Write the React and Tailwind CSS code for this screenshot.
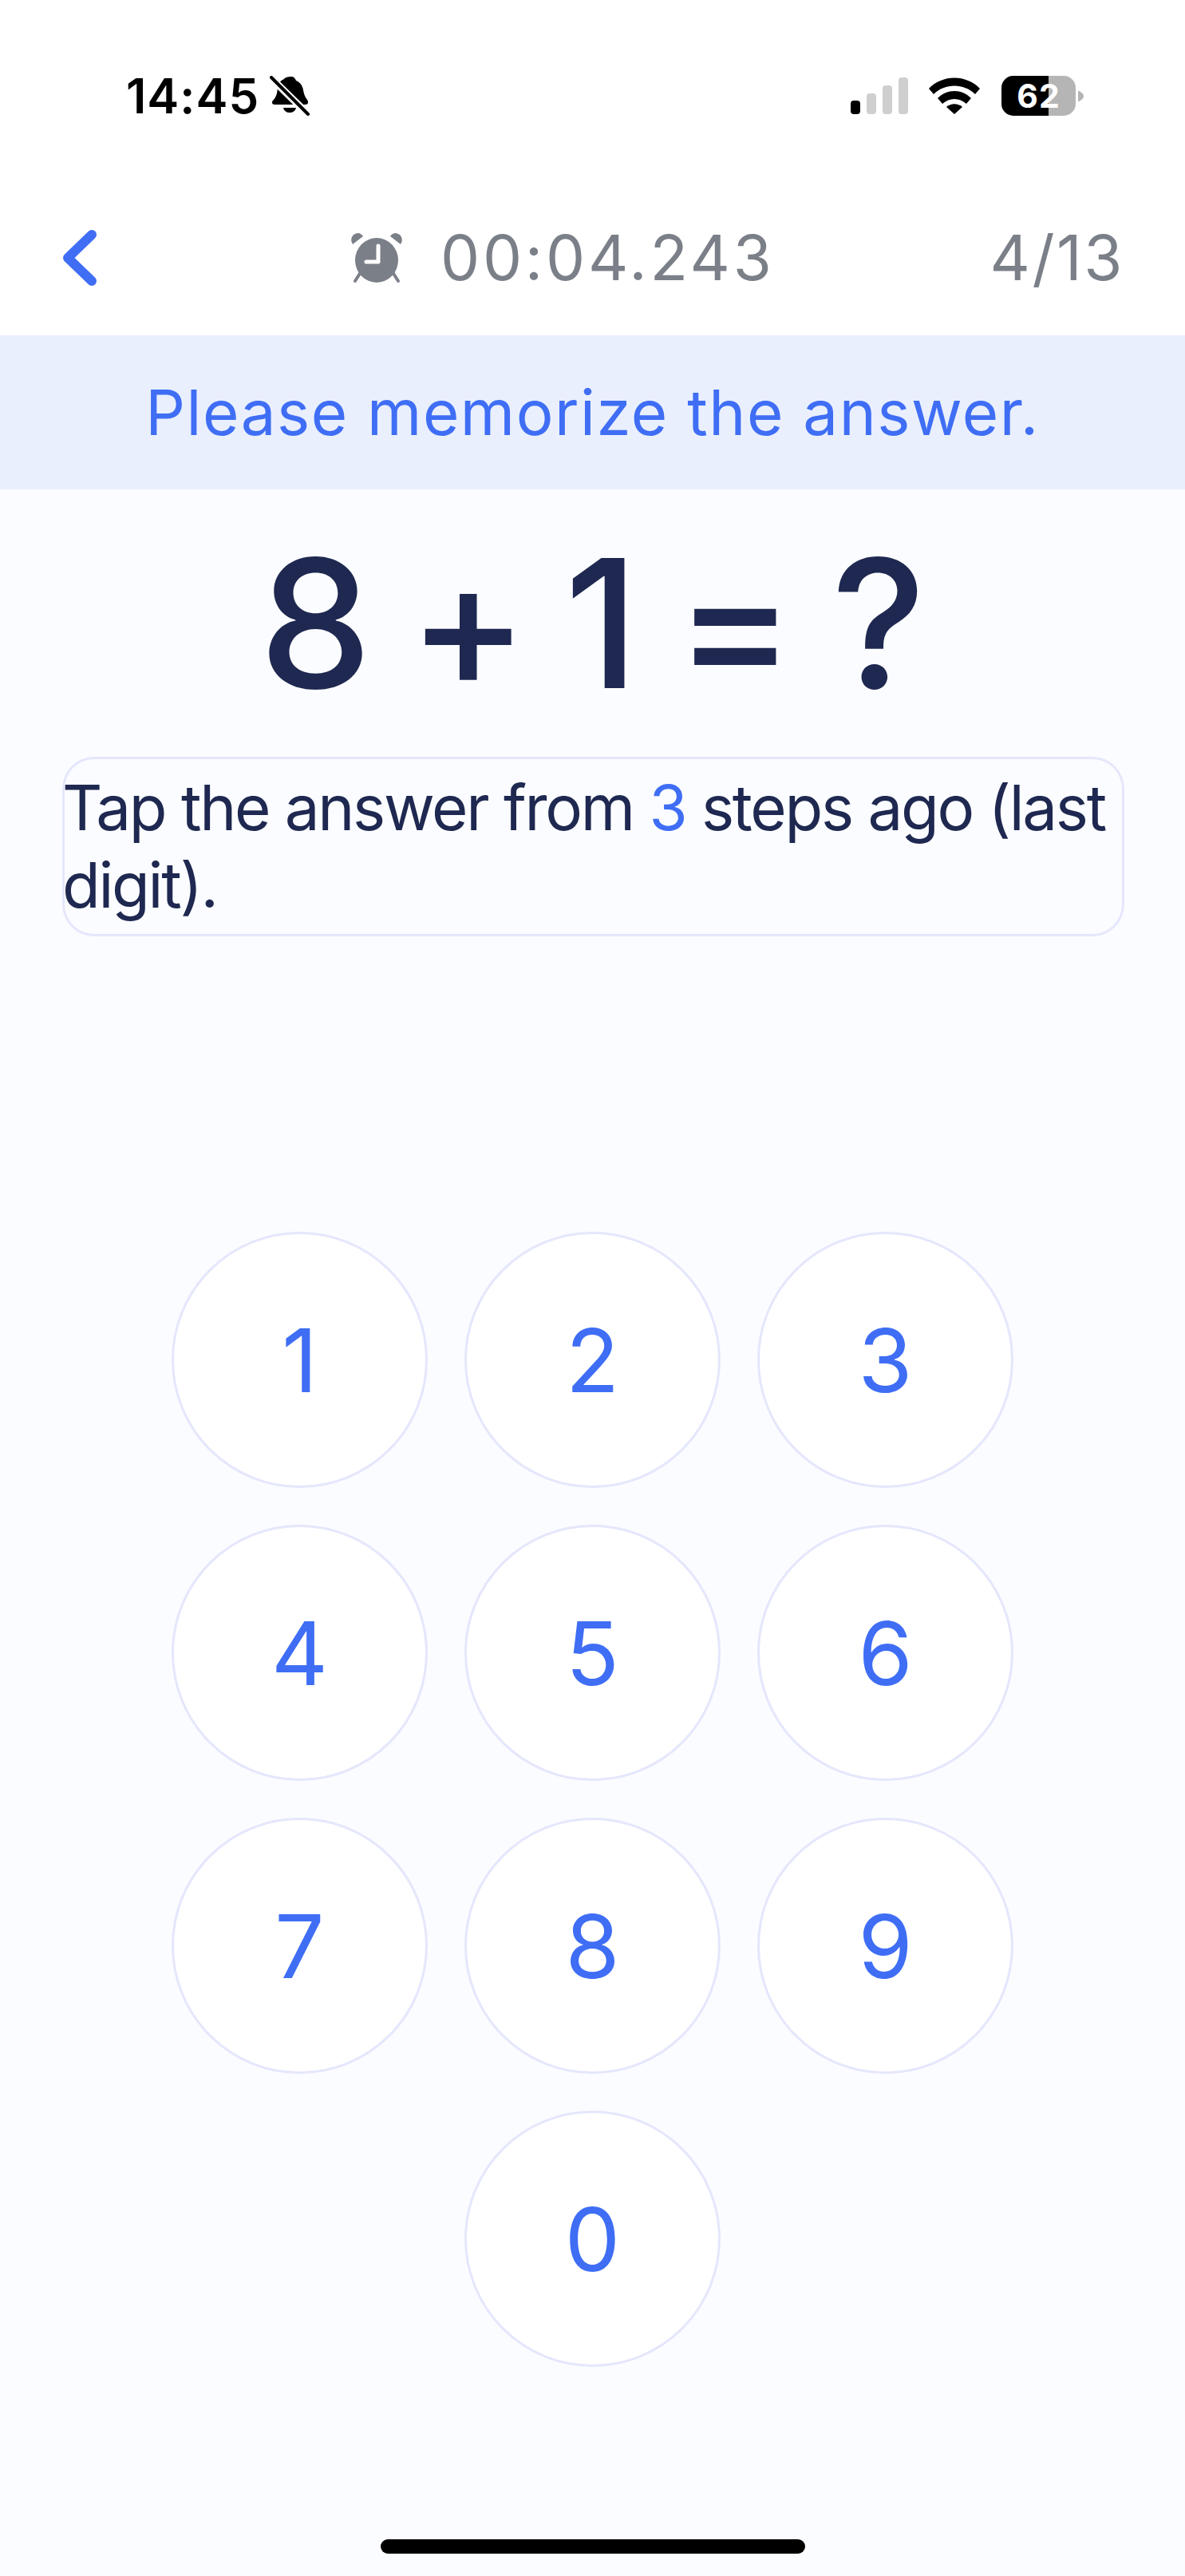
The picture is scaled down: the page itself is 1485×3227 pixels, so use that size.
const font = "font-['Inter','Liberation_Sans',sans-serif]"

function BellOff() {
  return (
    <svg viewBox="0 0 50 50" className="w-[50px] h-[50px] ml-[13px]">
      <path d="M27 1c3 0 5 2 6 5 5 2 8 6 9 12 1 5 2 8 5 12 2 3 1 6-2 6H6c-3 0-4-3-2-5 3-3 4-6 5-9l1-7c1-7 4-9 8-11 1-2 5-3 9-3z" fill="#000" />
      <path d="M17 40h16c-1 4-4 6-8 6s-7-2-8-6z" fill="#000" />
      <path d="M1 2l47 46" stroke="#fff" strokeWidth="9" />
      <path d="M2 2l46 46" stroke="#000" strokeWidth="4" strokeLinecap="round" />
    </svg>
  )
}

function Signal() {
  return (
    <div className="flex items-end gap-[8px] h-[46px]">
      <div className="w-[12px] h-[17px] rounded-[4px] bg-black" />
      <div className="w-[12px] h-[26px] rounded-[4px] bg-[#cfcfcf]" />
      <div className="w-[12px] h-[36px] rounded-[4px] bg-[#cfcfcf]" />
      <div className="w-[12px] h-[46px] rounded-[4px] bg-[#cfcfcf]" />
    </div>
  )
}

function Wifi() {
  return (
    <svg viewBox="0 0 64 46" className="w-[64px] h-[46px] ml-[26px]">
      <path d="M0 14C17-4 47-4 64 14l-6 7C44 7 20 7 6 21z" fill="#000" />
      <path d="M11 26c12-12 30-12 42 0l-6 7c-9-8-21-8-30 0z" fill="#000" />
      <path d="M22 37c6-5 14-5 20 0L32 46z" fill="#000" />
    </svg>
  )
}

function Battery() {
  return (
    <div className="flex items-center ml-[27px]">
      <div className="relative w-[93px] h-[50px] rounded-[15px] overflow-hidden bg-[#b5b5b5]">
        <div className="h-full w-[59px] bg-black" />
        <span className="absolute inset-0 flex items-center justify-center text-white text-[41px] font-bold leading-none tracking-[1px]">
          62
        </span>
      </div>
      <svg viewBox="0 0 8 16" className="w-[7px] h-[15px] ml-[3px]">
        <path d="M0 0c5 2 8 5 8 8s-3 6-8 8z" fill="#b5b5b5" />
      </svg>
    </div>
  )
}

function AlarmClock() {
  return (
    <svg viewBox="0 0 68 64" className="w-[68px] h-[64px]">
      <path d="M4 15C0 9 3 2 10 1c3 0 6 2 7 4z" fill="#7b7f88" />
      <path d="M64 15c4-6 1-13-6-14-3 0-6 2-7 4z" fill="#7b7f88" />
      <path d="M14 50L7 61M54 50l7 11" stroke="#7b7f88" strokeWidth="4" strokeLinecap="round" />
      <ellipse cx="34" cy="35" rx="27" ry="28" fill="#7b7f88" />
      <path d="M36 17v20H21" fill="none" stroke="#fff" strokeWidth="5" strokeLinecap="round" strokeLinejoin="round" />
    </svg>
  )
}

function Key({ n }) {
  return (
    <button className="w-[321px] h-[321px] rounded-full bg-white border-[3px] border-[#e4e7fc] flex items-center justify-center text-[110px] leading-none text-[#3f6ef5]">
      {n}
    </button>
  )
}

export default function App() {
  return (
    <div className={`${font} w-[1485px] h-[3227px] bg-[#fbfcff] flex flex-col overflow-hidden`}>
      {/* Status bar + nav */}
      <div className="h-[420px] bg-white flex flex-col">
        <div className="h-[268px] flex items-start justify-between pt-[95px] pl-[158px] pr-[127px]">
          <div className="flex items-center h-[50px]">
            <span className="text-[60px] leading-none font-semibold tracking-[1px] text-black">14:45</span>
            <BellOff />
          </div>
          <div className="flex items-center h-[50px]">
            <Signal />
            <Wifi />
            <Battery />
          </div>
        </div>
        <div className="flex items-center justify-between pl-[78px] pr-[76px] h-[110px]">
          <svg viewBox="0 0 44 70" className="w-[44px] h-[70px]">
            <path d="M37 6L7 35l30 29" fill="none" stroke="#3f6ef5" strokeWidth="12" strokeLinecap="round" strokeLinejoin="round" />
          </svg>
          <div className="flex items-center gap-[46px] ml-[46px]">
            <AlarmClock />
            <span className="text-[78px] leading-none tracking-[3.7px] text-[#7b7f88]">00:04.243</span>
          </div>
          <span className="text-[78px] leading-none tracking-[2.5px] text-[#7b7f88]">4/13</span>
        </div>
      </div>

      {/* Banner */}
      <div className="h-[193px] bg-[#e9effd] flex items-center justify-center">
        <span className="text-[78px] leading-none tracking-[1.5px] text-[#3f6ef5]">Please memorize the answer.</span>
      </div>

      {/* Equation */}
      <div className="h-[335px] flex items-center justify-center text-[224px] leading-none font-medium text-[#1e2850] gap-[46px]">
        <span>8</span>
        <span>+</span>
        <span>1</span>
        <span>=</span>
        <span>?</span>
      </div>

      {/* Hint */}
      <div className="ml-[78px] mr-[76px] h-[225px] rounded-[40px] ring-[3px] ring-inset ring-[#e4e7fc] text-[78px] leading-[97px] tracking-[-2.3px] text-[#1e2850] pt-[15px]">
        Tap the answer from <span className="text-[#3f6ef5]">3</span> steps ago (last digit).
      </div>

      {/* Keypad */}
      <div className="mt-[370px] grid grid-cols-3 gap-[46px] justify-items-center self-center w-[1055px]">
        {[1, 2, 3, 4, 5, 6, 7, 8, 9].map((n) => (
          <Key key={n} n={n} />
        ))}
        <div className="col-start-2">
          <Key n={0} />
        </div>
      </div>

      {/* Home indicator */}
      <div className="mt-[216px] mx-auto w-[532px] h-[18px] rounded-full bg-black" />
    </div>
  )
}
